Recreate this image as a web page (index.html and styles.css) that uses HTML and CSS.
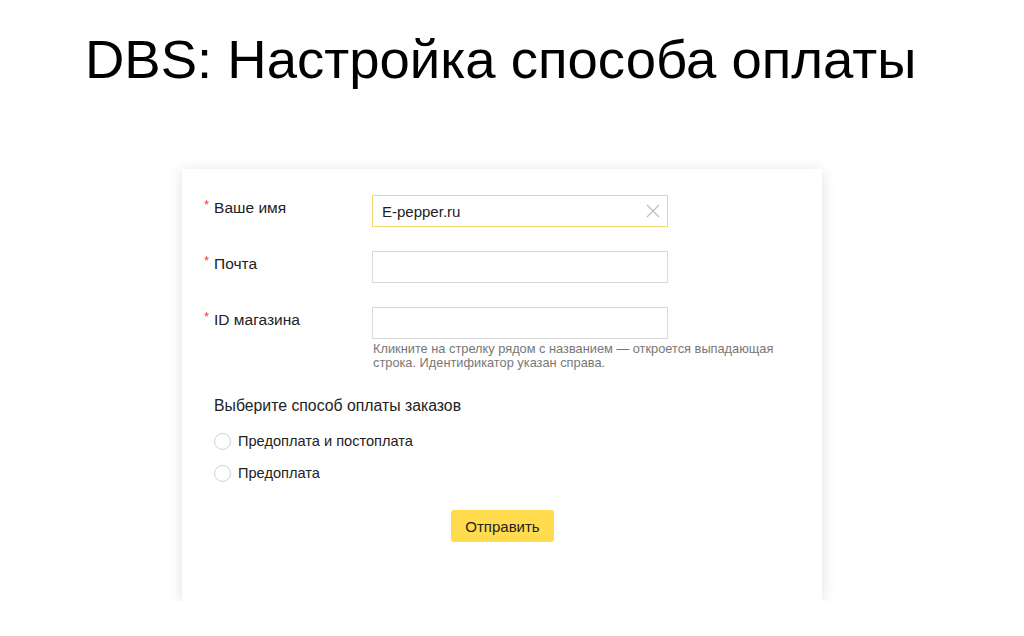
FILE: index.html
```html
<!DOCTYPE html>
<html lang="ru">
<head>
<meta charset="utf-8">
<link rel="stylesheet" href="styles.css">
</head>
<body>
<h1 class="title">DBS: Настройка способа оплаты</h1>
<div class="card">
  <div class="row">
    <label class="label"><span class="req">*</span>Ваше имя</label>
    <div class="field">
      <div class="input input-focus">
        <span class="value">E-pepper.ru</span>
        <svg class="clear" width="14" height="14" viewBox="0 0 14 14"><path d="M1 1L13 13M13 1L1 13" stroke="#bdbdbd" stroke-width="1.2" fill="none"/></svg>
      </div>
    </div>
  </div>
  <div class="row">
    <label class="label"><span class="req">*</span>Почта</label>
    <div class="field"><div class="input"></div></div>
  </div>
  <div class="row">
    <label class="label"><span class="req">*</span>ID магазина</label>
    <div class="field">
      <div class="input"></div>
      <p class="hint">Кликните на стрелку рядом с названием — откроется выпадающая строка. Идентификатор указан справа.</p>
    </div>
  </div>
  <div class="payment">
    <div class="payment-title">Выберите способ оплаты заказов</div>
    <div class="radio"><span class="circle"></span>Предоплата и постоплата</div>
    <div class="radio"><span class="circle"></span>Предоплата</div>
  </div>
  <div class="actions">
    <button class="btn">Отправить</button>
  </div>
</div>
</body>
</html>
```
FILE: styles.css
```css
html, body {
  margin: 0;
  padding: 0;
  background: #fff;
}
body {
  font-family: "Liberation Sans", Arial, sans-serif;
  color: #000;
}
.title {
  margin: 0;
  padding: 28px 0 0 85px;
  font-size: 54.5px;
  font-weight: normal;
  line-height: 64px;
  letter-spacing: 0;
}
.card {
  margin: 77px 0 0 182px;
  width: 640px;
  height: 432px;
  box-sizing: border-box;
  background: #fff;
  box-shadow: 0 2px 14px rgba(0,0,0,0.12);
  padding: 26px 0 0 22px;
}
.row {
  display: flex;
  margin-bottom: 24px;
}
.label {
  width: 168px;
  flex: none;
  font-size: 15.5px;
  color: #222;
  line-height: 18px;
  padding-top: 4px;
}
.req {
  color: #e8453c;
  font-size: 13px;
  vertical-align: top;
  position: relative;
  top: -3px;
  margin-right: 5px;
}
.field {
  width: 296px;
}
.input {
  height: 32px;
  box-sizing: border-box;
  border: 1px solid #d9d9d9;
  display: flex;
  align-items: center;
  justify-content: space-between;
  padding: 0 7px 0 9px;
}
.input-focus {
  border-color: #f5d66a;
}
.value {
  font-size: 15px;
  color: #222;
}
.hint {
  margin: 3px 0 0 1px;
  width: 420px;
  font-size: 12.8px;
  line-height: 14px;
  color: #777;
}
.row:nth-child(3) {
  margin-bottom: 0;
}
.payment {
  padding-left: 10px;
  margin-top: 27px;
}
.payment-title {
  font-size: 15.8px;
  color: #222;
  line-height: 18px;
  margin-bottom: 17px;
}
.radio {
  display: flex;
  align-items: center;
  font-size: 14.6px;
  color: #222;
  height: 18px;
  margin-bottom: 14px;
}
.circle {
  width: 15px;
  height: 15px;
  border: 1px solid #cfcfcf;
  border-radius: 50%;
  margin-right: 7px;
  background: #fff;
  flex: none;
}
.actions {
  display: flex;
  padding-left: 247px;
  margin-top: 28px;
}
.btn {
  width: 103px;
  height: 32px;
  background: #ffdb4d;
  border: none;
  border-radius: 3px;
  font-family: "Liberation Sans", Arial, sans-serif;
  font-size: 15px;
  color: #222;
  padding: 0;
}
```
